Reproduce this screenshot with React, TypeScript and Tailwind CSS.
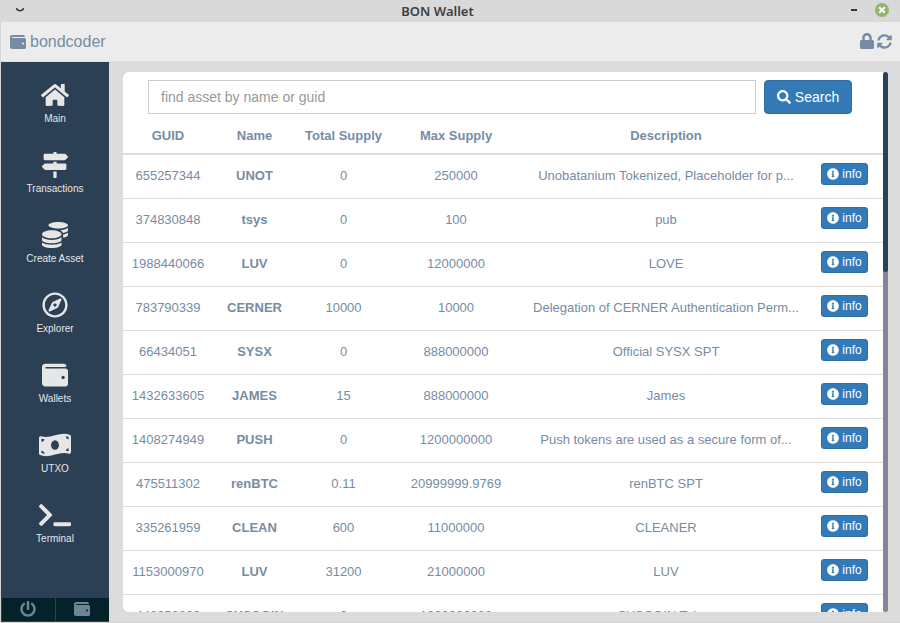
import React from "react";
import {
  FaCoins,
  FaHome,
  FaInfoCircle,
  FaLock,
  FaMapSigns,
  FaMoneyBillWave,
  FaPowerOff,
  FaRegCompass,
  FaSearch,
  FaSyncAlt,
  FaTerminal,
  FaWallet,
} from "react-icons/fa";
import type { IconType } from "react-icons";

const navItems: { label: string; icon: IconType; size: string }[] = [
  { label: "Main", icon: FaHome, size: "size-7" },
  { label: "Transactions", icon: FaMapSigns, size: "size-[26px]" },
  { label: "Create Asset", icon: FaCoins, size: "size-[26px]" },
  { label: "Explorer", icon: FaRegCompass, size: "size-[26px]" },
  { label: "Wallets", icon: FaWallet, size: "size-[26px]" },
  { label: "UTXO", icon: FaMoneyBillWave, size: "size-8" },
  { label: "Terminal", icon: FaTerminal, size: "size-8" },
];

interface Asset {
  guid: string;
  name: string;
  total: string;
  max: string;
  description: string;
}

const assets: Asset[] = [
  { guid: "655257344", name: "UNOT", total: "0", max: "250000", description: "Unobatanium Tokenized, Placeholder for p..." },
  { guid: "374830848", name: "tsys", total: "0", max: "100", description: "pub" },
  { guid: "1988440066", name: "LUV", total: "0", max: "12000000", description: "LOVE" },
  { guid: "783790339", name: "CERNER", total: "10000", max: "10000", description: "Delegation of CERNER Authentication Perm..." },
  { guid: "66434051", name: "SYSX", total: "0", max: "888000000", description: "Official SYSX SPT" },
  { guid: "1432633605", name: "JAMES", total: "15", max: "888000000", description: "James" },
  { guid: "1408274949", name: "PUSH", total: "0", max: "1200000000", description: "Push tokens are used as a secure form of..." },
  { guid: "475511302", name: "renBTC", total: "0.11", max: "20999999.9769", description: "renBTC SPT" },
  { guid: "335261959", name: "CLEAN", total: "600", max: "11000000", description: "CLEANER" },
  { guid: "1153000970", name: "LUV", total: "31200", max: "21000000", description: "LUV" },
  { guid: "442252293", name: "SYSCOIN", total: "0", max: "1000000000", description: "SYSCOIN Token" },
];

function TitleBar() {
  return (
    <div className="flex h-[22px] shrink-0 items-center justify-between bg-[#d9d9d9] pr-[11px] pl-4">
      <button type="button" aria-label="Window menu" className="flex w-5 pb-0.5">
        <svg viewBox="0 0 8 4" className="h-1 w-2" fill="none" stroke="#303030" strokeWidth="1.6">
          <path d="M0 0.5 L2 2 Q4 3.6 6 2 L8 0.5" />
        </svg>
      </button>
      <h1 className="pt-px font-['Noto_Sans',sans-serif] text-[13px] font-semibold text-[#404040]">BON Wallet</h1>
      <div className="flex w-[50px] items-center justify-end gap-[18px] pb-0.5">
        <button type="button" aria-label="Minimize" className="h-0.5 w-1.5 shrink-0 bg-[#333]" />
        <button type="button" aria-label="Close" className="shrink-0">
          <svg viewBox="0 0 14 14" className="size-3.5">
            <circle cx="7" cy="7" r="7" fill="#92b372" />
            <path d="M4.2 4.2 L9.8 9.8 M9.8 4.2 L4.2 9.8" stroke="#fff" strokeWidth="2" />
          </svg>
        </button>
      </div>
    </div>
  );
}

function AccountBar() {
  return (
    <header className="flex h-10 shrink-0 items-center justify-between border-b border-[#dcdfdf] bg-[#ececec] pr-2 pl-[9px] text-[#778ca3]">
      <div className="flex items-center gap-1 text-base">
        <FaWallet className="size-4" />
        <span>bondcoder</span>
      </div>
      <div className="flex items-center gap-[3px] pb-px">
        <button type="button" aria-label="Lock wallet">
          <FaLock className="h-4 w-3.5" />
        </button>
        <button type="button" aria-label="Refresh">
          <FaSyncAlt className="size-[15px]" />
        </button>
      </div>
    </header>
  );
}

function Sidebar() {
  return (
    <aside className="flex w-[108px] shrink-0 flex-col bg-[#2b3f55]">
      <nav className="flex flex-1 flex-col pt-[17px]">
        {navItems.map(({ label, icon: Icon, size }) => (
          <a key={label} href="#" className="flex h-[70px] flex-col items-center text-[#e6e6e6]">
            <span className="flex h-8 items-center">
              <Icon className={size} />
            </span>
            <span className="text-[10px] leading-4">{label}</span>
          </a>
        ))}
      </nav>
      <div className="flex h-6 gap-px border-b border-l border-[#2b3f55] text-[#708499] *:pr-px *:pb-0.5">
        <button type="button" aria-label="Log out" className="flex flex-1 items-center justify-center bg-[#04222a]">
          <FaPowerOff className="size-4" />
        </button>
        <button type="button" aria-label="Wallet" className="flex flex-1 items-center justify-center bg-[#04222a]">
          <FaWallet className="size-4" />
        </button>
      </div>
    </aside>
  );
}

function SearchForm() {
  return (
    <form className="flex gap-2 pt-2 pr-[31px] pl-[25px]" onSubmit={(e) => e.preventDefault()}>
      <input
        type="text"
        aria-label="Find asset"
        placeholder="find asset by name or guid"
        className="h-[34px] min-w-0 flex-1 border border-[#ccc] bg-white px-3 text-sm text-[#555] placeholder:text-[#999]"
      />
      <button
        type="submit"
        className="flex h-[34px] w-[88px] items-center justify-center gap-1 rounded border border-[#2e6da4] bg-[#337ab7] text-sm text-white"
      >
        <FaSearch className="size-3.5" />
        Search
      </button>
    </form>
  );
}

function AssetTable() {
  return (
    <table className="w-full table-fixed border-separate border-spacing-0 text-center text-[13px] text-[#778ca3]">
      <colgroup>
        <col className="w-[90px]" />
        <col className="w-[83px]" />
        <col className="w-[95px]" />
        <col className="w-[130px]" />
        <col />
        <col className="w-[72px]" />
      </colgroup>
      <thead>
        <tr>
          {["GUID", "Name", "Total Supply", "Max Supply", "Description"].map((h) => (
            <th key={h} scope="col" className="h-[41px] border-b-2 border-[#ddd] pt-1 font-bold">
              {h}
            </th>
          ))}
          <td className="border-b-2 border-[#ddd]" />
        </tr>
      </thead>
      <tbody>
        {assets.map((a) => (
          <tr key={a.guid} className="h-11 *:border-b *:border-[#ddd]">
            <td className="pb-0.5">{a.guid}</td>
            <td className="pb-0.5 font-bold">{a.name}</td>
            <td className="pb-0.5">{a.total}</td>
            <td className="pb-0.5">{a.max}</td>
            <td className="truncate pb-0.5">{a.description}</td>
            <td className="pt-2 pl-2.5 align-top">
              <button
                type="button"
                className="flex h-[22px] w-[47px] items-center justify-center gap-[3px] rounded-[3px] border border-[#2e6da4] bg-[#337ab7] text-xs text-white"
              >
                <FaInfoCircle className="size-3" />
                info
              </button>
            </td>
          </tr>
        ))}
      </tbody>
    </table>
  );
}

export default function App() {
  return (
    <div className="flex h-screen flex-col overflow-hidden bg-[#dcdcdc] font-['Liberation_Sans',Arial,sans-serif]">
      <TitleBar />
      <div className="flex min-h-0 flex-1 flex-col border-b border-l border-[#d4d4d4]">
        <AccountBar />
        <div className="flex min-h-0 flex-1">
          <Sidebar />
          <main className="flex min-w-0 flex-1 pt-2.5 pr-3 pb-2.5 pl-3.5">
            <section className="min-w-0 flex-1 overflow-hidden rounded-l-md bg-white">
              <SearchForm />
              <AssetTable />
            </section>
            <div className="w-[5px] shrink-0 overflow-hidden rounded-sm bg-[#84849b]">
              <div className="h-[200px] rounded-sm bg-[#2b3f55]" />
            </div>
          </main>
        </div>
      </div>
    </div>
  );
}
